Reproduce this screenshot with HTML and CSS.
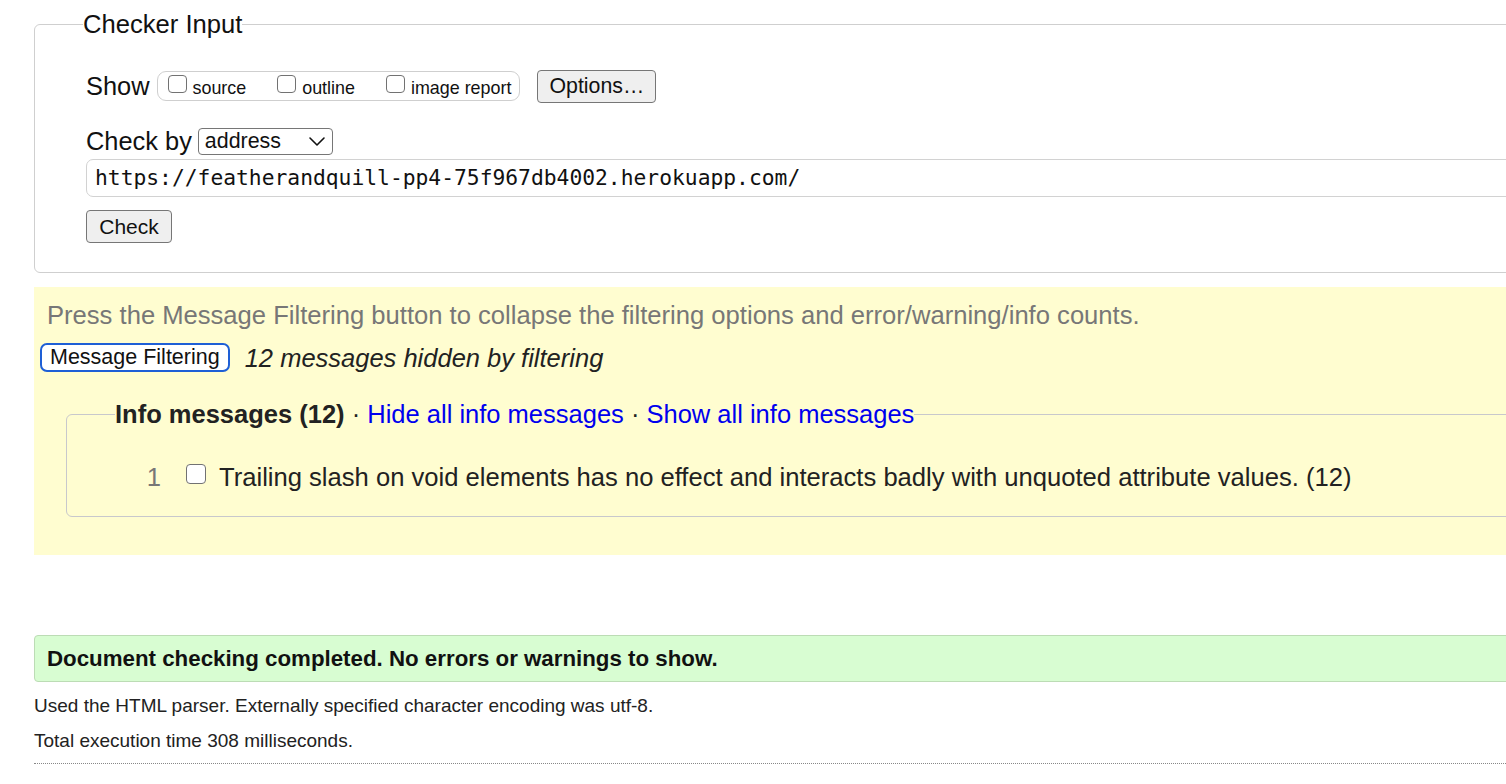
FILE: index.html
```html
<!DOCTYPE html>
<html lang="en">
<head>
<meta charset="utf-8">
<title>Nu Html Checker</title>
<link rel="stylesheet" href="styles.css">
</head>
<body>
<div class="page">
  <fieldset class="checker">
    <legend class="checker-legend">Checker Input</legend>
    <div class="show-row">
      <span class="row-label">Show</span>
      <div class="show-group">
        <label class="opt"><span class="box"></span><span class="opt-text">source</span></label>
        <label class="opt"><span class="box"></span><span class="opt-text">outline</span></label>
        <label class="opt"><span class="box"></span><span class="opt-text">image report</span></label>
      </div>
      <button class="btn btn-options" type="button">Options…</button>
    </div>
    <div class="checkby-row">
      <span class="row-label">Check by</span>
      <div class="select">
        <span>address</span>
        <svg class="chev" width="18" height="12" viewBox="0 0 18 12"><path d="M2 3 L9 10 L16 3" fill="none" stroke="#111" stroke-width="1.6" stroke-linecap="round" stroke-linejoin="round"/></svg>
      </div>
    </div>
    <div class="url">https://featherandquill-pp4-75f967db4002.herokuapp.com/</div>
    <button class="btn btn-check" type="button">Check</button>
  </fieldset>

  <section class="filters">
    <p class="press">Press the Message Filtering button to collapse the filtering options and error/warning/info counts.</p>
    <div class="filter-row">
      <button class="btn-filter" type="button">Message Filtering</button>
      <em class="hidden-count">12 messages hidden by filtering</em>
    </div>
    <fieldset class="info">
      <legend class="info-legend"><strong>Info messages (12)</strong> · <a href="#">Hide all info messages</a> · <a href="#">Show all info messages</a></legend>
      <div class="msg-row">
        <span class="msg-num">1</span>
        <span class="box"></span>
        <span class="msg-text">Trailing slash on void elements has no effect and interacts badly with unquoted attribute values. (12)</span>
      </div>
    </fieldset>
  </section>

  <div class="success">Document checking completed. No errors or warnings to show.</div>
  <p class="meta">Used the HTML parser. Externally specified character encoding was utf-8.</p>
  <p class="meta meta2">Total execution time 308 milliseconds.</p>
  <div class="dotted"></div>
</div>
</body>
</html>
```

FILE: styles.css
```css
html, body {
  margin: 0;
  padding: 0;
  background: #fff;
  overflow: hidden;
}
body {
  font-family: "Liberation Sans", Arial, Helvetica, sans-serif;
  color: #111;
}
.page {
  width: 1700px;
  padding-left: 34px;
}

/* Checker input fieldset */
.checker {
  margin: 9px 0 0 0;
  padding: 0 0 29px 51px;
  border: 1px solid #cfcfcf;
  border-radius: 6px;
  min-inline-size: 0;
}
.checker-legend {
  font-size: 25.6px;
  line-height: 30px;
  padding: 0;
  margin-left: -3px;
  color: #111;
}
.show-row {
  display: flex;
  align-items: center;
  height: 34px;
  margin-top: 30px;
}
.row-label {
  font-size: 25.4px;
  line-height: 28px;
}
.show-group {
  display: flex;
  align-items: center;
  margin-left: 7px;
  height: 30px;
  box-sizing: border-box;
  border: 1px solid #cfcfcf;
  border-radius: 9px;
  padding: 0 8px 0 10px;
  gap: 31px;
}
.opt {
  display: flex;
  align-items: center;
}
.box {
  display: inline-block;
  width: 19px;
  height: 18px;
  box-sizing: border-box;
  border: 1.5px solid #727272;
  border-radius: 4px;
  background: #fff;
}
.opt .box {
  position: relative;
  top: -2px;
}
.opt-text {
  font-size: 17.9px;
  margin-left: 6px;
  position: relative;
  top: 2px;
}
.btn {
  font-family: "Liberation Sans", Arial, sans-serif;
  background: #efefef;
  border: 1px solid #767676;
  border-radius: 4px;
  color: #111;
  box-sizing: border-box;
  padding: 0;
}
.btn-options {
  margin-left: 17px;
  width: 119px;
  height: 33px;
  font-size: 21.3px;
}
.checkby-row {
  display: flex;
  align-items: center;
  margin-top: 24px;
  height: 28px;
}
.select {
  margin-left: 6px;
  width: 135px;
  height: 27px;
  box-sizing: border-box;
  border: 1px solid #767676;
  border-radius: 4px;
  display: flex;
  align-items: center;
  justify-content: space-between;
  padding: 0 6px 0 6px;
  font-size: 21.4px;
}
.chev { display: block; }
.url {
  margin-top: 4px;
  height: 38px;
  box-sizing: border-box;
  border: 1px solid #d2d2d2;
  border-radius: 7px;
  padding-left: 8px;
  font-family: "DejaVu Sans Mono", "Liberation Mono", monospace;
  font-size: 21.3px;
  line-height: 36px;
  color: #111;
}
.btn-check {
  margin-top: 13px;
  width: 86px;
  height: 33px;
  font-size: 21px;
  display: block;
}

/* Filters */
.filters {
  margin-top: 14px;
  background: #fffdd0;
  padding: 14px 0 38px 13px;
}
.press {
  margin: 0;
  font-size: 25.6px;
  line-height: 28px;
  color: #777;
}
.filter-row {
  display: flex;
  align-items: center;
  margin-top: 14px;
  margin-left: -7px;
}
.btn-filter {
  font-family: "Liberation Sans", Arial, sans-serif;
  font-size: 21.5px;
  height: 29px;
  padding: 0 8px;
  background: #fff;
  border: 2px solid #1e5fd6;
  border-radius: 7px;
  color: #111;
}
.hidden-count {
  margin-left: 15px;
  font-size: 25.5px;
  line-height: 28px;
  color: #222;
}
.info {
  margin: 28px 0 0 19px;
  padding: 0;
  border: 1px solid #c8c8cc;
  border-radius: 6px;
  min-inline-size: 0;
}
.info-legend {
  margin-left: 48px;
  padding: 0;
  font-size: 25.5px;
  line-height: 28px;
  color: #222;
}
.info-legend a {
  color: #0000ee;
  text-decoration: none;
}
.msg-row {
  display: flex;
  align-items: center;
  margin-top: 35px;
  margin-bottom: 25px;
  height: 28px;
}
.msg-num {
  width: 94px;
  text-align: right;
  font-size: 25.6px;
  color: #777;
}
.msg-row .box {
  margin-left: 25px;
  width: 20px;
  height: 20px;
  position: relative;
  top: -3px;
}
.msg-text {
  margin-left: 13px;
  font-size: 25.6px;
  color: #222;
}

/* Result */
.success {
  margin-top: 80px;
  height: 47px;
  box-sizing: border-box;
  background: #d8fdd2;
  border: 1px solid #bcdcb5;
  border-radius: 4px;
  padding-left: 12px;
  font-weight: bold;
  font-size: 22.3px;
  line-height: 45px;
  color: #111;
}
.meta {
  margin: 12px 0 0 0;
  font-size: 19px;
  line-height: 24px;
  color: #222;
}
.meta2 {
  margin-top: 11px;
}
.dotted {
  margin-top: 10px;
  border-top: 1px dotted #888;
}
```
